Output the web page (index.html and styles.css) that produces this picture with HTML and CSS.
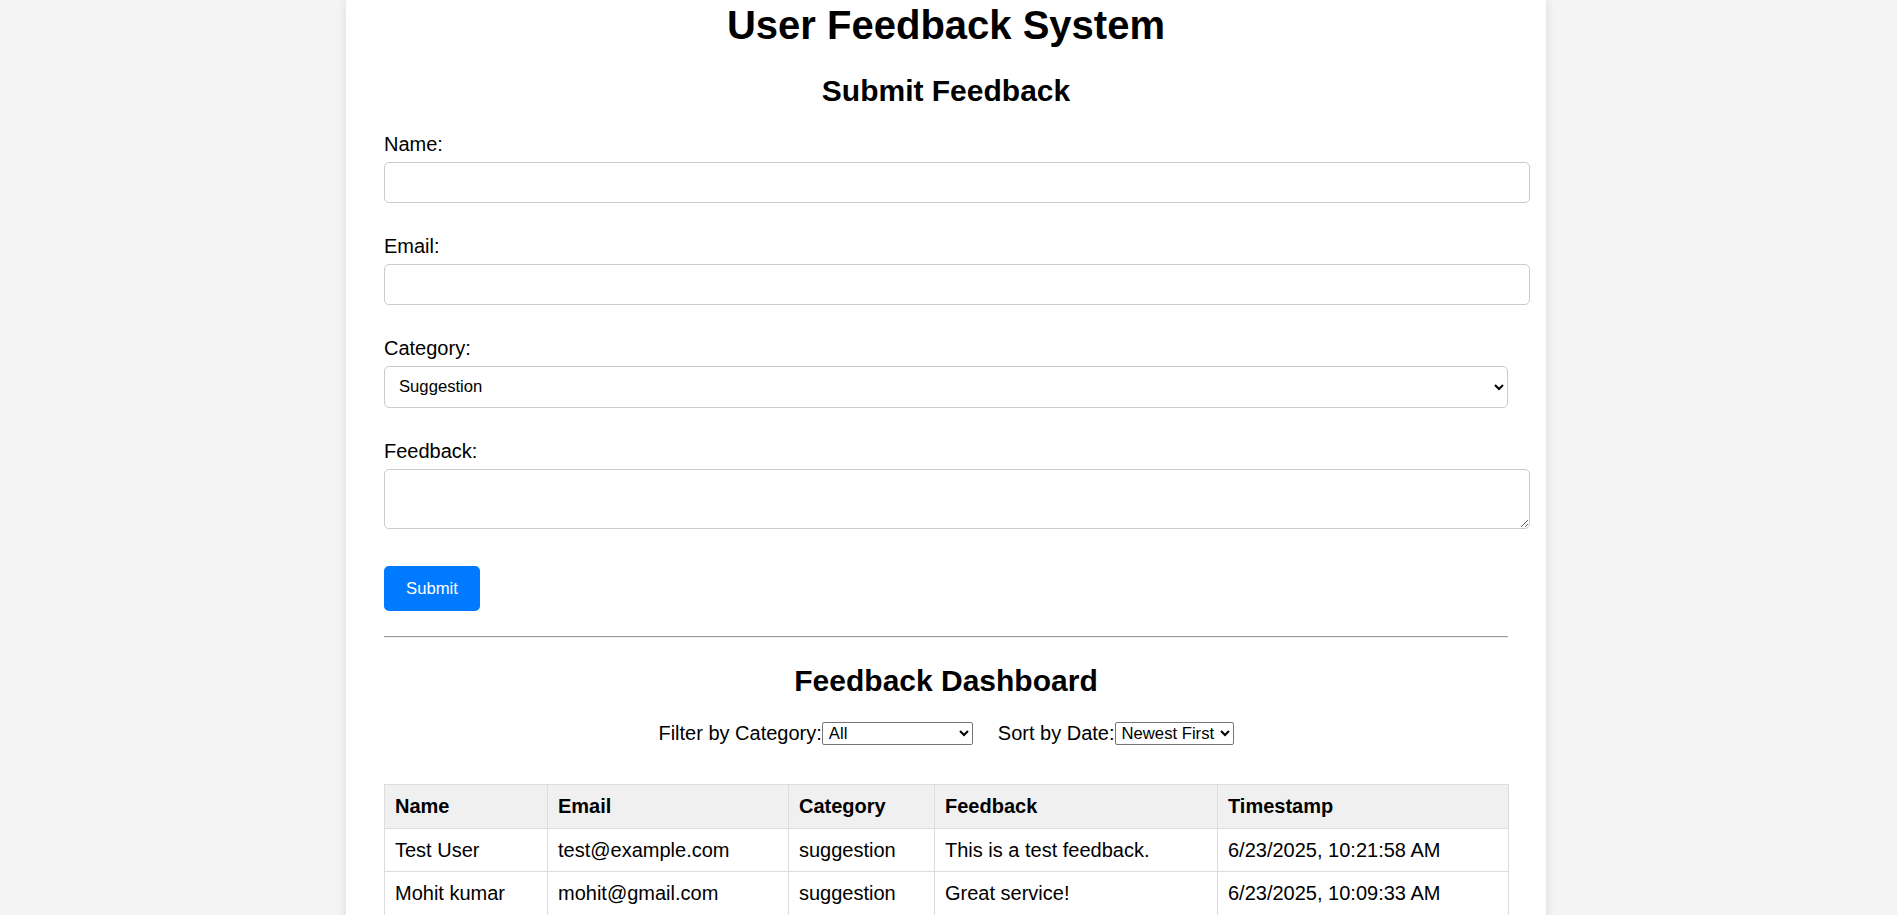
FILE: index.html
```html
<!DOCTYPE html>
<html lang="en">
<head>
<meta charset="utf-8">
<title>User Feedback System</title>
<link rel="stylesheet" href="styles.css">
</head>
<body>
<div class="container">
  <h1 class="title">User Feedback System</h1>

  <h2 class="section-title">Submit Feedback</h2>
  <form class="feedback-form">
    <div class="field">
      <label class="field-label" for="name">Name:</label>
      <input class="text-input" type="text" id="name">
    </div>
    <div class="field">
      <label class="field-label" for="email">Email:</label>
      <input class="text-input" type="email" id="email">
    </div>
    <div class="field">
      <label class="field-label" for="category">Category:</label>
      <select class="category-select" id="category">
        <option>Suggestion</option>
        <option>Bug Report</option>
        <option>Complaint</option>
        <option>Other</option>
      </select>
    </div>
    <div class="field field-last">
      <label class="field-label" for="feedback">Feedback:</label>
      <textarea class="text-area" id="feedback"></textarea>
    </div>
    <button class="submit-btn" type="button">Submit</button>
  </form>

  <hr class="divider">

  <h2 class="section-title">Feedback Dashboard</h2>
  <div class="filters">
    <span class="filter-label">Filter by Category:</span>
    <select class="mini-select filter-select">
      <option>All</option>
      <option>Suggestion</option>
      <option>Bug Report</option>
      <option>Complaint</option>
    </select>
    <span class="filter-label sort-label">Sort by Date:</span>
    <select class="mini-select sort-select">
      <option>Newest First</option>
      <option>Oldest First</option>
    </select>
  </div>

  <table class="feedback-table">
    <colgroup>
      <col class="col-name">
      <col class="col-email">
      <col class="col-category">
      <col class="col-feedback">
      <col class="col-time">
    </colgroup>
    <thead>
      <tr>
        <th>Name</th>
        <th>Email</th>
        <th>Category</th>
        <th>Feedback</th>
        <th>Timestamp</th>
      </tr>
    </thead>
    <tbody>
      <tr>
        <td>Test User</td>
        <td>test@example.com</td>
        <td>suggestion</td>
        <td>This is a test feedback.</td>
        <td>6/23/2025, 10:21:58 AM</td>
      </tr>
      <tr>
        <td>Mohit kumar</td>
        <td>mohit@gmail.com</td>
        <td>suggestion</td>
        <td>Great service!</td>
        <td>6/23/2025, 10:09:33 AM</td>
      </tr>
    </tbody>
  </table>
</div>
</body>
</html>
```

FILE: styles.css
```css
html, body {
  margin: 0;
  padding: 0;
}

body {
  background: #f4f4f4;
  font-family: "Liberation Sans", Arial, sans-serif;
  font-size: 20px;
  color: #000;
  padding-right: 5px;
}

.container {
  width: 1200px;
  box-sizing: border-box;
  margin: 0 auto;
  background: #fff;
  padding: 2px 38px 40px 38px;
  box-shadow: 0 0 10px rgba(0, 0, 0, 0.1);
}

.title {
  margin: 0;
  font-size: 40px;
  line-height: 46px;
  font-weight: bold;
  text-align: center;
}

.section-title {
  margin: 26px 0 24px 0;
  font-size: 30px;
  line-height: 34.5px;
  font-weight: bold;
  text-align: center;
}

.feedback-form {
  margin: 0;
}

.field {
  margin-bottom: 32px;
}

.field-last {
  margin-bottom: 37.5px;
}

.field-label {
  display: block;
  line-height: 23px;
  margin-bottom: 6px;
}

.text-input,
.text-area {
  display: block;
  width: 100%;
  padding: 10px;
  border: 1px solid #ccc;
  border-radius: 5px;
  font-family: "Liberation Sans", Arial, sans-serif;
  font-size: 16.67px;
  line-height: 19px;
  background: #fff;
  margin: 0;
}

.text-input {
  height: 19px;
}

.text-area {
  height: 38px;
  resize: vertical;
}

.category-select {
  display: block;
  width: 100%;
  height: 42px;
  box-sizing: border-box;
  padding: 0 10px;
  border: 1px solid #ccc;
  border-radius: 5px;
  background: #fff;
  font-family: "Liberation Sans", Arial, sans-serif;
  font-size: 16.67px;
  color: #000;
  margin: 0;
}

.submit-btn {
  display: block;
  width: 96px;
  height: 45px;
  padding: 0;
  border: none;
  border-radius: 5px;
  background: #007bff;
  color: #fff;
  font-family: "Liberation Sans", Arial, sans-serif;
  font-size: 16.67px;
  cursor: pointer;
  margin: 0;
}

.divider {
  margin: 24.5px 0 0 0;
  border: 0;
  border-top: 1px solid #9a9a9a;
  border-bottom: 1px solid #eee;
  height: 0;
}

.filters {
  display: flex;
  justify-content: center;
  align-items: center;
  height: 23px;
  line-height: 23px;
  margin-bottom: 39px;
}

.filter-label {
  white-space: nowrap;
}

.sort-label {
  margin-left: 25px;
}

.mini-select {
  height: 23px;
  box-sizing: border-box;
  border: 1px solid #767676;
  border-radius: 2px;
  background: #fff;
  font-family: "Liberation Sans", Arial, sans-serif;
  font-size: 16.67px;
  color: #000;
  padding: 0 0 0 2px;
  margin: 0;
}

.filter-select {
  width: 151px;
}

.sort-select {
  width: 119px;
}

.feedback-table {
  width: 100%;
  border-collapse: collapse;
  table-layout: fixed;
}

.col-name { width: 163px; }
.col-email { width: 241px; }
.col-category { width: 146px; }
.col-feedback { width: 283px; }
.col-time { width: 291px; }

.feedback-table th,
.feedback-table td {
  border: 1px solid #ddd;
  padding: 10px;
  text-align: left;
  line-height: 22.6px;
  white-space: nowrap;
}

.feedback-table th {
  background: #f0f0f0;
  font-weight: bold;
}
```
